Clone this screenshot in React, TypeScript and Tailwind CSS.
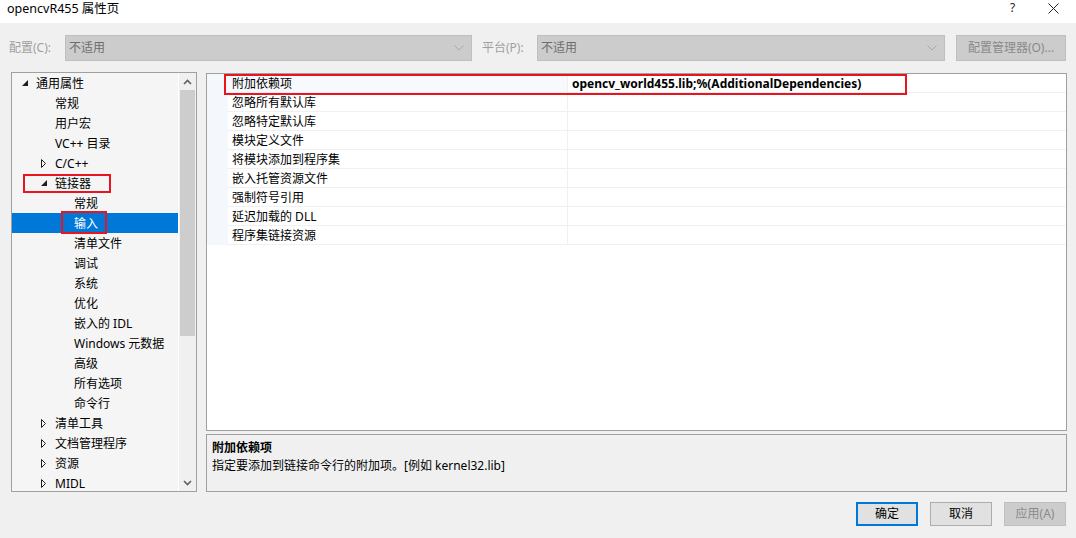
import React from "react";

const tree: { t: string; lvl: number; tri?: "open" | "closed"; sel?: boolean }[] = [
  { t: "通用属性", lvl: 0, tri: "open" },
  { t: "常规", lvl: 1 },
  { t: "用户宏", lvl: 1 },
  { t: "VC++ 目录", lvl: 1 },
  { t: "C/C++", lvl: 1, tri: "closed" },
  { t: "链接器", lvl: 1, tri: "open" },
  { t: "常规", lvl: 2 },
  { t: "输入", lvl: 2, sel: true },
  { t: "清单文件", lvl: 2 },
  { t: "调试", lvl: 2 },
  { t: "系统", lvl: 2 },
  { t: "优化", lvl: 2 },
  { t: "嵌入的 IDL", lvl: 2 },
  { t: "Windows 元数据", lvl: 2 },
  { t: "高级", lvl: 2 },
  { t: "所有选项", lvl: 2 },
  { t: "命令行", lvl: 2 },
  { t: "清单工具", lvl: 1, tri: "closed" },
  { t: "文档管理程序", lvl: 1, tri: "closed" },
  { t: "资源", lvl: 1, tri: "closed" },
  { t: "MIDL", lvl: 1, tri: "closed" },
];

const props = [
  "附加依赖项",
  "忽略所有默认库",
  "忽略特定默认库",
  "模块定义文件",
  "将模块添加到程序集",
  "嵌入托管资源文件",
  "强制符号引用",
  "延迟加载的 DLL",
  "程序集链接资源",
];

function Tri({ kind }: { kind?: "open" | "closed" }) {
  if (kind === "open")
    return (
      <svg width="15" height="20" viewBox="0 0 15 20" className="shrink-0">
        <polygon points="1,13 7,13 7,7" fill="#1e1e1e" />
      </svg>
    );
  if (kind === "closed")
    return (
      <svg width="15" height="20" viewBox="0 0 15 20" className="shrink-0">
        <polygon points="1.5,6.5 1.5,14.5 5.5,10.5" fill="none" stroke="#1e1e1e" strokeWidth="1" />
      </svg>
    );
  return <div className="w-[15px] shrink-0" />;
}

function Chevron({ up }: { up?: boolean }) {
  return (
    <svg width="9" height="6" viewBox="0 0 9 6">
      {up ? (
        <polyline points="1,5 4.5,1.5 8,5" fill="none" stroke="#606060" strokeWidth="1.6" />
      ) : (
        <polyline points="1,1 4.5,4.5 8,1" fill="none" stroke="#606060" strokeWidth="1.6" />
      )}
    </svg>
  );
}

function Combo({ w }: { w: string }) {
  return (
    <div className={`${w} h-[26px] bg-[#cccccc] border border-[#bfbfbf] flex items-center justify-between pl-[3px] pr-[7px]`}>
      <span className="text-[#6d6d6d]">不适用</span>
      <svg width="10" height="6" viewBox="0 0 10 6">
        <polyline points="0.5,0.5 5,5 9.5,0.5" fill="none" stroke="#a8a8a8" strokeWidth="1" />
      </svg>
    </div>
  );
}

export default function App() {
  return (
    <div className="w-[1076px] h-[538px] flex flex-col bg-[#f0f0f0] text-[12px] leading-[16px] text-black font-['Noto_Sans','Noto_Sans_CJK_SC',sans-serif] overflow-hidden">
      {/* title bar */}
      <div className="h-[23px] bg-white flex items-start justify-between shrink-0">
        <div className="pl-[7px] pt-[1px] text-[12.5px]">opencvR455 属性页</div>
        <div className="flex items-start">
          <div className="w-[20px] text-[12px] text-[#222]">?</div>
          <div className="w-[46px] flex justify-center pt-[3px]">
            <svg width="11" height="11" viewBox="0 0 11 11">
              <line x1="0.5" y1="0.5" x2="10.5" y2="10.5" stroke="#222" strokeWidth="1" />
              <line x1="10.5" y1="0.5" x2="0.5" y2="10.5" stroke="#222" strokeWidth="1" />
            </svg>
          </div>
        </div>
      </div>

      {/* config row */}
      <div className="flex items-center mt-[12px] h-[26px] shrink-0">
        <div className="w-[65px] pl-[9px] text-[#a0a0a0]">配置(C):</div>
        <Combo w="w-[407px]" />
        <div className="w-[65px] pl-[10px] text-[#a0a0a0]">平台(P):</div>
        <Combo w="w-[408px]" />
        <div className="ml-[11px] w-[110px] h-[26px] bg-[#cccccc] border border-[#bfbfbf] flex items-center justify-center text-[#8a8a8a]">
          配置管理器(O)...
        </div>
      </div>

      {/* main */}
      <div className="flex mt-[11px] h-[420px] shrink-0">
        {/* tree */}
        <div className="ml-[11px] w-[186px] h-[420px] border border-[#a0a0a0] bg-[#f5f5f5] flex overflow-hidden">
          <div className="relative flex-1 h-full overflow-hidden">
            {tree.map((r, i) => (
              <div
                key={i}
                className={`h-[20px] flex items-center ${r.sel ? "bg-[#0078d7] text-white" : ""}`}
              >
                <div className={r.lvl === 0 ? "w-[9px] shrink-0" : r.lvl === 1 ? "w-[28px] shrink-0" : "w-[47px] shrink-0"} />
                <Tri kind={r.tri} />
                <span className="whitespace-nowrap pt-[2px]">{r.t}</span>
              </div>
            ))}
            <div className="absolute left-[11px] top-[101px] w-[88px] h-[19px] border-2 border-[#e8141f]" />
            <div className="absolute left-[49px] top-[138px] w-[46px] h-[23px] border-2 border-[#e8141f]" />
          </div>
          <div className="w-[1px] bg-white" />
          <div className="w-[17px] bg-[#f0f0f0] flex flex-col items-center">
            <div className="h-[17px] flex items-center justify-center">
              <Chevron up />
            </div>
            <div className="w-[15px] h-[246px] bg-[#cdcdcd]" />
            <div className="flex-1" />
            <div className="h-[17px] flex items-center justify-center">
              <Chevron />
            </div>
          </div>
        </div>

        {/* right side */}
        <div className="ml-[9px] mt-[1px] w-[861px] flex flex-col">
          <div className="relative h-[358px] border border-[#a0a0a0] bg-white">
            {props.map((p, i) => (
              <div key={i} className="h-[19px] flex">
                <div className="w-[21px] bg-[#f4f7fc] shrink-0" />
                <div
                  className={`w-[340px] shrink-0 border-b border-r border-[#f0f0f0] pl-[4px] pt-[2px] flex items-center ${i === 0 ? "bg-[#f7f9fc]" : ""}`}
                >
                  {p}
                </div>
                <div className="flex-1 border-b border-[#f0f0f0] pl-[4px] pt-[2px] flex items-center">
                  {i === 0 ? (
                    <span className="font-bold whitespace-nowrap">opencv_world455.lib;%(AdditionalDependencies)</span>
                  ) : null}
                </div>
              </div>
            ))}
            <div className="absolute left-[17px] top-[0px] w-[683px] h-[21px] border-2 border-[#e8141f]" />
          </div>
          <div className="mt-[3px] h-[58px] border border-[#a0a0a0] bg-[#f0f0f0] pl-[5px] pt-[3px]">
            <div className="font-bold leading-[18px] pt-[1px]">附加依赖项</div>
            <div className="leading-[18px]">指定要添加到链接命令行的附加项。[例如 kernel32.lib]</div>
          </div>
        </div>
      </div>

      {/* buttons */}
      <div className="flex justify-end gap-[12px] pr-[10px] mt-[10px]">
        <div className="w-[62px] h-[24px] bg-[#e1e1e1] border-2 border-[#0078d7] flex items-center justify-center">确定</div>
        <div className="w-[62px] h-[24px] bg-[#e1e1e1] border border-[#adadad] flex items-center justify-center">取消</div>
        <div className="w-[62px] h-[24px] bg-[#cccccc] border border-[#bfbfbf] flex items-center justify-center text-[#8a8a8a]">应用(A)</div>
      </div>
    </div>
  );
}
